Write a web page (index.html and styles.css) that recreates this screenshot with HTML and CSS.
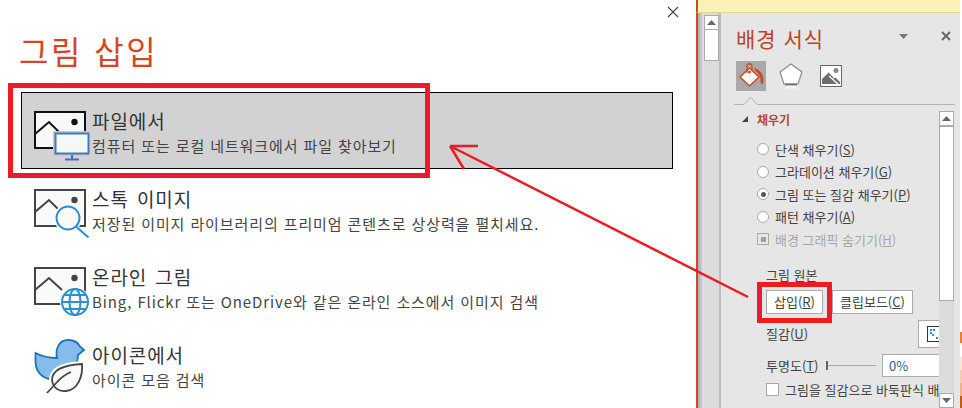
FILE: index.html
```html
<!DOCTYPE html>
<html lang="ko">
<head>
  <meta charset="UTF-8">
  <title>그림 삽입</title>
  <link rel="stylesheet" href="styles.css">
</head>
<body>
  <div class="dialog">
    <div class="dialog-close">
      <svg width="12" height="12" viewBox="0 0 12 12"><path d="M1 1L11 11M11 1L1 11" stroke="#444" stroke-width="1.100" fill="none"/></svg>
    </div>
    <h1>그림 삽입</h1>

    <div class="item selected">
      <svg class="icon" width="58" height="56" viewBox="32 108 58 56">
        <rect x="35" y="112" width="50" height="36" fill="#f7f9f9" stroke="#111" stroke-width="2"/>
        <path d="M35 134L49 122L60 133" fill="none" stroke="#111" stroke-width="2"/>
        <circle cx="74.500" cy="122" r="3.200" fill="#111"/>
        <rect x="53" y="131" width="36" height="25" fill="#c8c8c8"/>
        <rect x="55.500" y="133.500" width="33" height="20" fill="#f4f8f8" stroke="#4478b8" stroke-width="2"/>
        <path d="M72 155V159M65 159.500H79" stroke="#3a70b5" stroke-width="2" fill="none"/>
      </svg>
      <div class="item-text">
        <div class="item-title">파일에서</div>
        <div class="item-sub">컴퓨터 또는 로컬 네트워크에서 파일 찾아보기</div>
      </div>
    </div>

    <div class="item">
      <svg class="icon" width="58" height="56" viewBox="32 186 58 56">
        <rect x="35" y="190" width="50" height="36" fill="#fafafa" stroke="#444" stroke-width="2"/>
        <path d="M35 212L49 200L60 211" fill="none" stroke="#444" stroke-width="2"/>
        <circle cx="74.500" cy="200" r="3.200" fill="#444"/>
        <circle cx="68" cy="218" r="14" fill="#fff"/>
        <circle cx="68" cy="218" r="11.500" fill="#fafafa" stroke="#2b90d0" stroke-width="2"/>
        <path d="M76 226.500L88.500 237.500" stroke="#2b90d0" stroke-width="2.200"/>
      </svg>
      <div class="item-text">
        <div class="item-title">스톡 이미지</div>
        <div class="item-sub">저장된 이미지 라이브러리의 프리미엄 콘텐츠로 상상력을 펼치세요.</div>
      </div>
    </div>

    <div class="item">
      <svg class="icon" width="58" height="56" viewBox="32 264 58 56">
        <rect x="35" y="268" width="50" height="36" fill="#fafafa" stroke="#444" stroke-width="2"/>
        <path d="M35 290L49 278L62 290" fill="none" stroke="#444" stroke-width="2"/>
        <circle cx="74.500" cy="278" r="3.200" fill="#444"/>
        <circle cx="75" cy="302" r="15" fill="#fff"/>
        <g fill="none" stroke="#2b90d0" stroke-width="2">
          <circle cx="75" cy="302" r="13"/>
          <ellipse cx="75" cy="302" rx="5.500" ry="13"/>
          <path d="M62 302H88M64 295H86M64 309H86"/>
        </g>
      </svg>
      <div class="item-text">
        <div class="item-title">온라인 그림</div>
        <div class="item-sub">Bing, Flickr 또는 OneDrive와 같은 온라인 소스에서 이미지 검색</div>
      </div>
    </div>

    <div class="item">
      <svg class="icon icon-duck" width="58" height="66" viewBox="32 336 58 66">
        <path d="M35.500 353C41 356 48 358 57 358C55 349 59 340 68 340C74 340 78 343 79.500 346L84 350L78 355C78 362 75 366 72 369C66 376 62 378 57 379.500C47 380 36 376 35.500 362Z" fill="#85bcec" stroke="#1f72b8" stroke-width="1.800"/>
        <path d="M82 364C83 376 78 390 66 391C59 392 53 388 52 380C52 370 64 365 82 364Z" fill="#fafafa" stroke="#fff" stroke-width="6"/>
        <path d="M82 364C83 376 78 390 66 391C59 392 53 388 52 380C52 370 64 365 82 364Z" fill="#fafafa" stroke="#444" stroke-width="1.800"/>
        <path d="M47 393L58 381C62 377 66 374 71 372" fill="none" stroke="#444" stroke-width="1.800"/>
      </svg>
      <div class="item-text">
        <div class="item-title">아이콘에서</div>
        <div class="item-sub">아이콘 모음 검색</div>
      </div>
    </div>
  </div>

  <div class="side">
    <div class="yellow-bar"></div>
    <div class="side-main">
      <div class="shadow-edge"></div>
      <div class="slide-scroll">
        <div class="scroll-btn">
          <svg width="9" height="5" viewBox="0 0 9 5"><path d="M4.500 0L9 5H0Z" fill="#666"/></svg>
        </div>
        <div class="slide-thumb"></div>
      </div>

      <div class="pane">
        <div class="pane-head">
          <h2>배경 서식</h2>
          <svg class="pane-menu" width="9" height="5" viewBox="0 0 9 5"><path d="M0 0H9L4.500 5Z" fill="#777"/></svg>
          <svg class="pane-close" width="10" height="10" viewBox="0 0 10 10"><path d="M1 1L9 9M9 1L1 9" stroke="#666" stroke-width="2" fill="none"/></svg>
        </div>

        <div class="tabs">
          <div class="tab active">
            <svg width="30" height="30" viewBox="0 0 30 30">
              <path d="M13.500 7L23 16L13.500 25L4 16Z" fill="#fff" stroke="#d24726" stroke-width="1.500"/>
              <path d="M11 12V5C11 2 16 2 16 5V10" fill="none" stroke="#d24726" stroke-width="1.300"/>
              <circle cx="13.500" cy="11" r="1.500" fill="#d24726"/>
              <path d="M18 7C24 8 29 14 27 23C25 24 24 21 24.500 17C24 14 22 12 19.500 10Z" fill="#d24726"/>
            </svg>
          </div>
          <div class="tab">
            <svg width="30" height="30" viewBox="0 0 30 30">
              <defs><linearGradient id="fade" x1="0" y1="0" x2="0" y2="1"><stop offset="0" stop-color="#fff"/><stop offset="1" stop-color="#e6e6e6"/></linearGradient></defs>
              <path d="M10 24H20L22 29H8Z" fill="url(#fade)"/>
              <path d="M15 3L26 11L22 23H8L4 11Z" fill="#fff" stroke="#8a8a8a" stroke-width="1.200"/>
              <path d="M9 23.500H21" stroke="#777" stroke-width="2"/>
            </svg>
          </div>
          <div class="tab">
            <svg width="22" height="22" viewBox="0 0 22 22">
              <rect x="0.500" y="0.500" width="21" height="21" fill="#fff" stroke="#666"/>
              <circle cx="16" cy="5.500" r="2.500" fill="#8a8a8a"/>
              <path d="M2 19V14L8.500 7.500L14 13L12 15L15.500 12.500L20 17V19Z" fill="#6e6e6e"/>
              <path d="M9 11L19 20" stroke="#fff" stroke-width="1.200"/>
            </svg>
          </div>
        </div>

        <svg class="tab-rule" width="221" height="9" viewBox="0 0 221 9"><path d="M0 8.500H10L16.500 1L23 8.500H221" fill="#e6e6e6" stroke="#b4b4b4"/></svg>

        <div class="pane-body">
          <div class="form">
            <div class="section-title">
              <svg width="6" height="6" viewBox="0 0 6 6"><path d="M6 0V6H0Z" fill="#444"/></svg>
              <span>채우기</span>
            </div>
            <div class="radio-row"><span class="radio"></span><span>단색 채우기(<u>S</u>)</span></div>
            <div class="radio-row"><span class="radio"></span><span>그라데이션 채우기(<u>G</u>)</span></div>
            <div class="radio-row"><span class="radio checked"></span><span>그림 또는 질감 채우기(<u>P</u>)</span></div>
            <div class="radio-row"><span class="radio"></span><span>패턴 채우기(<u>A</u>)</span></div>
            <div class="radio-row muted"><span class="check mixed"></span><span>배경 그래픽 숨기기(<u>H</u>)</span></div>

            <div class="source">
              <div class="source-label">그림 원본</div>
              <div class="btn-row">
                <div class="btn insert"><span>삽입(<u>R</u>)</span></div>
                <div class="btn clipboard"><span>클립보드(<u>C</u>)</span></div>
              </div>
              <div class="texture-row">
                <span>질감(<u>U</u>)</span>
                <div class="texture-btn">
                  <svg width="16" height="16" viewBox="0 0 16 16">
                    <rect x="0.500" y="0.500" width="15" height="15" fill="#fff" stroke="#333"/>
                    <path d="M3 3h2v2H3zM6 3h2v2H6zM3 6h2v2H3zM5 8h2v2H5zM9 11h2v2H9zM12 11h2v2h-2zM12 8h2v2h-2z" fill="#2b90d0"/>
                  </svg>
                </div>
              </div>
              <div class="opacity-row">
                <span class="opacity-label">투명도(<u>T</u>)</span>
                <div class="slider"><span class="slider-knob"></span><span class="slider-line"></span></div>
                <div class="opacity-input">0%</div>
              </div>
              <div class="tile-row"><span class="check"></span><span>그림을 질감으로 바둑판식 배</span></div>
            </div>
          </div>

          <div class="form-scroll">
            <div class="scroll-btn">
              <svg width="9" height="5" viewBox="0 0 9 5"><path d="M4.500 0L9 5H0Z" fill="#666"/></svg>
            </div>
            <div class="form-thumb"></div>
            <div class="scroll-btn down">
              <svg width="9" height="5" viewBox="0 0 9 5"><path d="M0 0H9L4.500 5Z" fill="#666"/></svg>
            </div>
          </div>
        </div>
      </div>

      <div class="swatches">
        <span class="sw-white"></span>
        <span class="sw-orange"></span>
        <span class="sw-blank"></span>
        <span class="sw-1"></span>
        <span class="sw-2"></span>
        <span class="sw-3"></span>
        <span class="sw-4"></span>
      </div>
    </div>
  </div>

  <!-- red marks drawn over the screenshot -->
  <div class="mark mark-file"></div>
  <div class="mark mark-insert"></div>
  <svg class="mark-arrow" width="962" height="408" viewBox="0 0 962 408">
    <path d="M748 297L450 146M450 146L478 146M450 146L464 169" fill="none" stroke="#ed1c24" stroke-width="2.500"/>
  </svg>
</body>
</html>
```

FILE: styles.css
```css
* {
  box-sizing: border-box;
}
html, body {
  height: 100%;
}
body {
  margin: 0;
  display: flex;
  height: 408px;
  overflow: hidden;
  font-family: "Noto Sans CJK KR", "Noto Sans", sans-serif;
  background-color: white;
  color: #444;
}

/* left dialog */
.dialog {
  width: 696px;
  flex: none;
  padding: 0 23px 0 21px;
  background-color: white;
}
.dialog-close {
  display: flex;
  justify-content: flex-end;
  height: 6px;
  margin-right: -6px;
  padding-top: 6px;
}
h1 {
  margin: 21px 0 0 -2px;
  height: 65px;
  font-size: 32px;
  font-weight: 400;
  line-height: 46px;
  letter-spacing: 2.500px;
  color: #d24726;
}
.item {
  display: flex;
  height: 77px;
  margin-bottom: 1px;
  padding: 15px 0 0 10px;
  border: 1px solid transparent;
}
.item.selected {
  background-color: #d2d2d2;
  border-color: black;
}
.icon {
  flex: none;
  margin-right: 2px;
}
.icon-duck {
  margin-top: -6px;
}
.item-title {
  height: 25px;
  font-size: 19px;
  line-height: 25px;
  letter-spacing: 0.900px;
  word-spacing: 2px;
  color: #333;
}
.item-sub {
  font-size: 15px;
  line-height: 25px;
  letter-spacing: 0.900px;
  color: #444;
}

/* right side */
.side {
  flex: 1;
  display: flex;
  flex-direction: column;
  min-width: 0;
}
.yellow-bar {
  height: 13px;
  margin-right: 2px;
  background-color: #fbf3b5;
  border-bottom: 1px solid #dfd98e;
  border-left: 2px solid #d24726;
}
.side-main {
  flex: 1;
  display: flex;
  min-height: 0;
}
.shadow-edge {
  width: 8px;
  flex: none;
  border-left: 2px solid #d24726;
  background: linear-gradient(to right, #aaa, #e6e6e6);
}
.slide-scroll {
  width: 17px;
  flex: none;
  padding-top: 2px;
  background-color: #dcdcdc;
  border-right: 2px solid #bdbdbd;
}
.scroll-btn {
  display: flex;
  align-items: center;
  justify-content: center;
  width: 15px;
  height: 15px;
  background-color: white;
  border: 1px solid #ababab;
}
.slide-thumb {
  width: 15px;
  height: 31px;
  background-color: white;
  border: 1px solid #ababab;
  border-top-width: 0;
}
.pane {
  flex: 1;
  display: flex;
  flex-direction: column;
  min-width: 0;
  padding-left: 13px;
  background-color: #e6e6e6;
}
.pane-head {
  display: flex;
  align-items: center;
  height: 48px;
  padding-top: 2px;
}
h2 {
  margin: 0 0 0 2px;
  font-size: 21px;
  font-weight: 400;
  letter-spacing: 1px;
  color: #b7472a;
}
.pane-menu {
  margin-left: auto;
  margin-top: -4px;
}
.pane-close {
  margin: -4px 9px 0 33px;
}
.tabs {
  display: flex;
  align-items: center;
  gap: 10px;
  height: 30px;
  padding-left: 2px;
}
.tab {
  display: flex;
  align-items: center;
  justify-content: center;
  width: 30px;
  height: 30px;
}
.tab.active {
  background-color: #a9a9a9;
}
.tab-rule {
  display: block;
  margin-top: 5px;
}
.pane-body {
  flex: 1;
  display: flex;
  min-height: 0;
  margin-right: 6px;
  padding-top: 6px;
}
.form {
  flex: 1;
  min-width: 0;
  overflow: hidden;
  font-size: 13px;
  color: #444;
}
.section-title {
  display: flex;
  align-items: center;
  gap: 9px;
  height: 16px;
  margin: 0 0 11px 8px;
  font-size: 12px;
  font-weight: 700;
  color: #b7472a;
}
.section-title svg {
  flex: none;
}
.radio-row {
  display: flex;
  align-items: center;
  gap: 6px;
  height: 22.500px;
  padding-left: 23px;
  white-space: nowrap;
}
.radio {
  width: 12px;
  height: 12px;
  flex: none;
  display: flex;
  align-items: center;
  justify-content: center;
  background-color: white;
  border: 1px solid #aaa;
  border-radius: 50%;
}
.radio.checked::after {
  content: "";
  width: 5px;
  height: 5px;
  border-radius: 50%;
  background-color: #555;
}
.check {
  width: 13px;
  height: 13px;
  flex: none;
  display: flex;
  align-items: center;
  justify-content: center;
  background-color: white;
  border: 1px solid #aaa;
}
.check.mixed {
  width: 12px;
  height: 12px;
  background-color: #e6e6e6;
}
.check.mixed::after {
  content: "";
  width: 5px;
  height: 5px;
  background-color: #a0a0a0;
}
.muted {
  color: #a6a6a6;
}
.source {
  padding: 15px 0 0 32px;
}
.source-label {
  height: 24px;
  line-height: 18px;
}
.btn-row {
  display: flex;
  gap: 9px;
}
.btn {
  display: flex;
  align-items: center;
  justify-content: center;
  height: 24px;
  background-color: white;
  border: 1px solid #ababab;
  white-space: nowrap;
}
.insert {
  width: 57px;
}
.clipboard {
  width: 81px;
}
.texture-row {
  display: flex;
  justify-content: space-between;
  align-items: center;
  height: 28px;
  margin-top: 6px;
}
.texture-btn {
  display: flex;
  align-items: center;
  padding-left: 8px;
  width: 21px;
  height: 28px;
  overflow: hidden;
  background-color: white;
  border: 1px solid #ababab;
  border-right-width: 0;
}
.texture-btn svg {
  flex: none;
}
.opacity-row {
  display: flex;
  align-items: center;
  height: 23px;
  margin-top: 6px;
}
.opacity-label {
  width: 60px;
  flex: none;
  white-space: nowrap;
}
.slider {
  display: flex;
  align-items: center;
  width: 50px;
  flex: none;
}
.slider-knob {
  width: 2px;
  height: 9px;
  background-color: #666;
}
.slider-line {
  flex: 1;
  height: 1px;
  background-color: #aaa;
}
.opacity-input {
  flex: 1;
  height: 23px;
  margin-left: 6px;
  padding-left: 6px;
  line-height: 21px;
  background-color: white;
  border: 1px solid #ababab;
  border-right-width: 0;
  color: #2a5c8a;
}
.tile-row {
  display: flex;
  align-items: center;
  gap: 6px;
  height: 20px;
  margin-top: 3px;
  white-space: nowrap;
}
.form-scroll {
  width: 15px;
  flex: none;
  display: flex;
  flex-direction: column;
  background-color: #dcdcdc;
}
.form-thumb {
  width: 15px;
  height: 175px;
  background-color: white;
  border: 1px solid #ababab;
}
.scroll-btn.down {
  margin-top: auto;
}
.swatches {
  width: 2px;
  flex: none;
  display: flex;
  flex-direction: column;
}
.sw-white { height: 319px; background-color: white; }
.sw-orange { height: 11px; background-color: #ed7d31; }
.sw-blank { height: 14px; background-color: white; }
.sw-1 { height: 13px; background-color: #fbe5d6; }
.sw-2 { height: 13px; background-color: #f8cbad; }
.sw-3 { height: 13px; background-color: #f4b183; }
.sw-4 { flex: 1; background-color: #c55a11; }

/* annotations on top */
.mark {
  position: absolute;
  border: 5px solid #ed1c24;
}
.mark-file {
  left: 8px;
  top: 83px;
  width: 422px;
  height: 95px;
}
.mark-insert {
  left: 757px;
  top: 282px;
  width: 75px;
  height: 41px;
}
.mark-arrow {
  position: absolute;
  left: 0;
  top: 0;
  pointer-events: none;
}
```
